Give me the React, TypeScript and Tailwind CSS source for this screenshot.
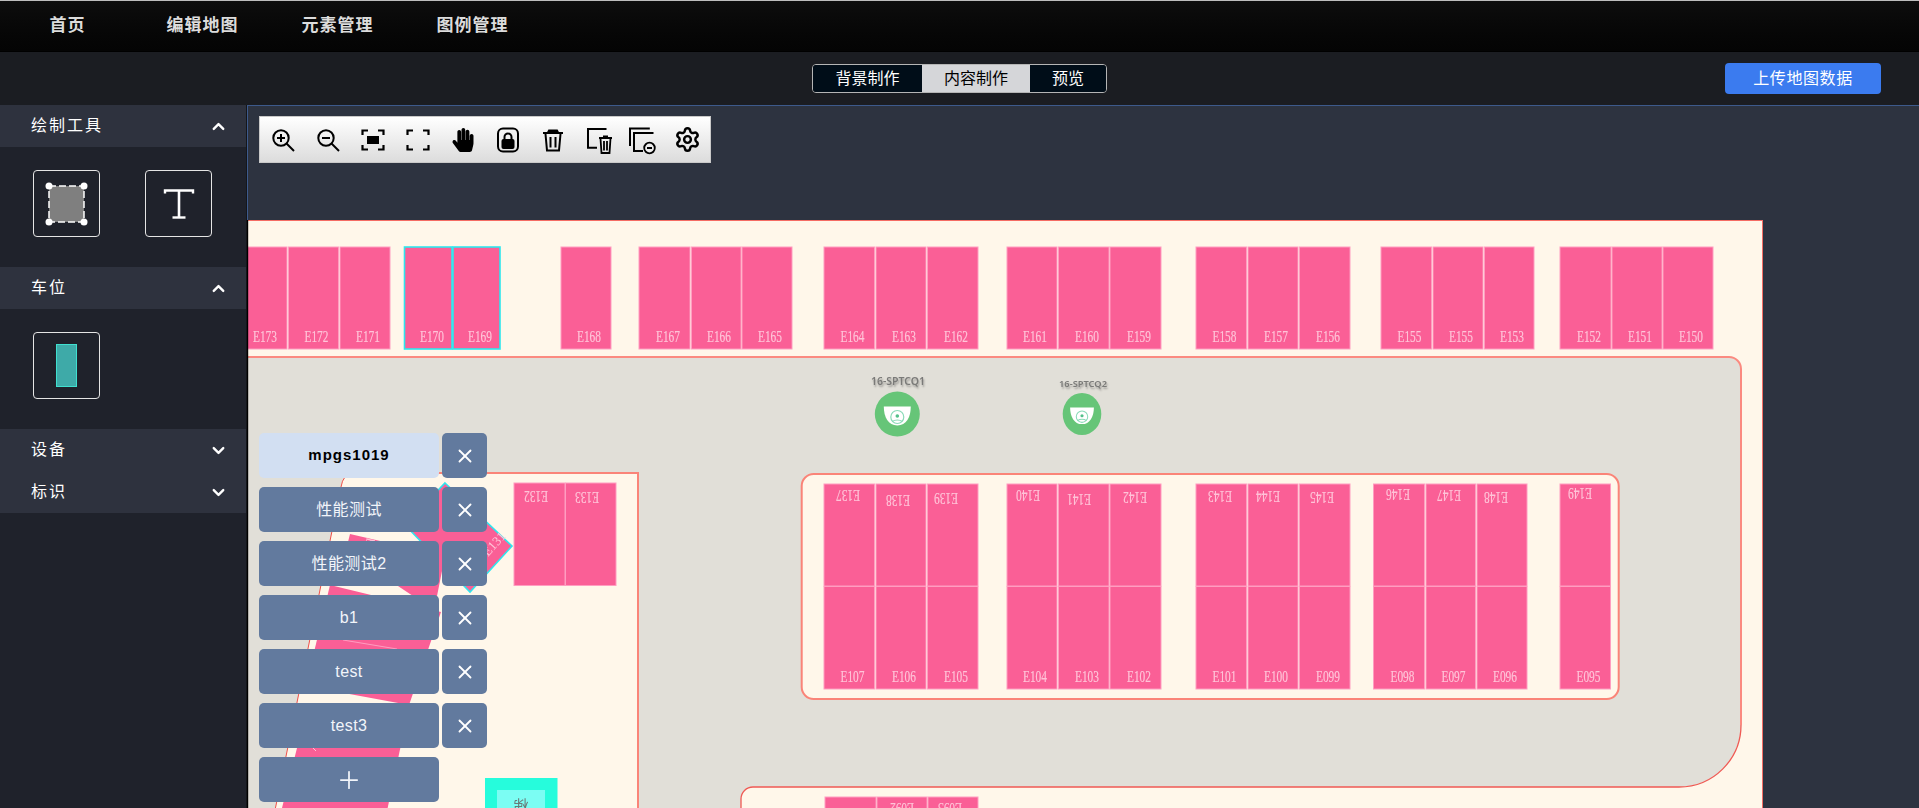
import { ChevronDown, ChevronUp, Plus, Settings, X } from 'lucide-react';
import { FaHandPaper } from 'react-icons/fa';

const navItems = ['首页', '编辑地图', '元素管理', '图例管理'];
const layers = ['mpgs1019', '性能测试', '性能测试2', 'b1', 'test', 'test3'];

// [left, right, label]
const topRow: [number, number, string][] = [
  [238, 287, 'E173'], [288.5, 338.5, 'E172'], [340, 390, 'E171'],
  [561, 611, 'E168'],
  [639, 690, 'E167'], [691.5, 741, 'E166'], [742, 792, 'E165'],
  [824, 874.5, 'E164'], [876, 926, 'E163'], [927.5, 978, 'E162'],
  [1007, 1057, 'E161'], [1058.5, 1109, 'E160'], [1110, 1161, 'E159'],
  [1196, 1246.5, 'E158'], [1248, 1298, 'E157'], [1299.5, 1350, 'E156'],
  [1381, 1431.5, 'E155'], [1433, 1483, 'E155'], [1484.5, 1534, 'E153'],
  [1560, 1611, 'E152'], [1612, 1662, 'E151'], [1663, 1713, 'E150'],
];

// [left, right, top label, top label x, top label y, bottom label]
const islandCols: [number, number, string, number, number, string][] = [
  [824, 874.5, 'E137', 836, 490, 'E107'], [876, 926, 'E138', 886, 495, 'E106'], [927.5, 978, 'E139', 934, 493, 'E105'],
  [1007, 1057, 'E140', 1016, 490, 'E104'], [1058.5, 1109, 'E141', 1067, 494, 'E103'], [1110, 1161, 'E142', 1123, 492, 'E102'],
  [1196, 1246.5, 'E143', 1208, 491, 'E101'], [1248, 1298, 'E144', 1256, 491, 'E100'], [1299.5, 1350, 'E145', 1310, 492, 'E099'],
  [1373.5, 1424.5, 'E146', 1386, 489, 'E098'], [1426, 1475.5, 'E147', 1437, 490, 'E097'], [1477, 1527, 'E148', 1484, 492, 'E096'],
  [1560, 1610.5, 'E149', 1568, 488, 'E095'],
];

function SpaceLabel({ x, y, text, flip }: { x: number; y: number; text: string; flip?: boolean }) {
  // y is the top of the letters
  return (
    <text
      x={x}
      y={y + 11}
      fontSize={16.5}
      fill="#ffc4d8"
      stroke="#ffc4d8"
      strokeWidth={0.15}
      fontFamily="'Liberation Serif', serif"
      textLength={24}
      lengthAdjust="spacingAndGlyphs"
      transform={flip ? `rotate(180 ${x + 12} ${y + 5.5})` : undefined}
    >
      {text}
    </text>
  );
}

function Space({ x1, x2, y1, y2, selected }: { x1: number; x2: number; y1: number; y2: number; selected?: boolean }) {
  return (
    <rect
      x={x1}
      y={y1}
      width={x2 - x1}
      height={y2 - y1}
      fill="#fa5f96"
      stroke={selected ? '#2ee6ee' : '#ff9dc0'}
      strokeWidth={selected ? 1.6 : 1}
    />
  );
}

function Camera({ cx, scale }: { cx: number; scale: number }) {
  return (
    <g transform={`translate(${cx} 414) scale(${scale})`}>
      <path d="M-13.5 -7.5 H13.5 C13.5 3 9 11.5 0 11.5 C-9 11.5 -13.5 3 -13.5 -7.5 Z" fill="#fff" />
      <circle cx={0} cy={3} r={6.5} fill="none" stroke="#8adbb8" strokeWidth={1.2} />
      <circle cx={0} cy={2} r={1.8} fill="#52c08a" />
      <path d="M-5 7.5 C-2.5 5.5 2.5 5.5 5 7.5" fill="none" stroke="#8adbb8" strokeWidth={1.2} />
    </g>
  );
}

function ParkingMap() {
  return (
    <svg
      className="absolute left-0 top-[114px] blur-[0.3px]"
      width={1516}
      height={589}
      viewBox="247 220 1516 589"
    >
      <rect x={247} y={220.5} width={1515.5} height={600} fill="#fff7ea" stroke="#f56c64" strokeWidth={1} />

      {/* road */}
      <path
        d="M248 357 H1729 a12 12 0 0 1 12 12 V725 a62 62 0 0 1 -62 62 H753 a12 12 0 0 0 -12 12 V820 H248 Z"
        fill="#e1dfd8"
      />
      <path d="M248 357 H1729 a12 12 0 0 1 12 12 V725" fill="none" stroke="#fb8a80" strokeWidth={2} />
      <path d="M1741 725 a62 62 0 0 1 -62 62 H753 a12 12 0 0 0 -12 12 V820" fill="none" stroke="#ef5a54" strokeWidth={1.3} />

      {/* islands */}
      <rect x={801.7} y={474} width={817} height={225} rx={12} fill="#fff7ea" stroke="#fa8478" strokeWidth={2} />
      <path d="M638 820 V473 H353 Q343 474 341 487 L273 820 Z" fill="#fff7ea" />
      <path d="M638 820 V473 H353" fill="none" stroke="#fa8478" strokeWidth={2} />
      <path d="M353 473 Q343 474 341 487 L273 820" fill="none" stroke="#ef4f4a" strokeWidth={1} />

      {/* top row */}
      {topRow.map(([x1, x2, label]) => (
        <g key={`${label}-${x1}`}>
          <Space x1={x1} x2={x2} y1={247} y2={349} />
          <SpaceLabel x={x2 - 34} y={331} text={label} />
        </g>
      ))}
      <Space x1={404.5} x2={452} y1={247} y2={349} selected />
      <Space x1={453} x2={500} y1={247} y2={349} selected />
      <SpaceLabel x={420} y={331} text="E170" />
      <SpaceLabel x={468} y={331} text="E169" />

      {/* middle island */}
      {islandCols.map(([x1, x2, top, tx, ty, bottom]) => (
        <g key={top}>
          <Space x1={x1} x2={x2} y1={484} y2={586} />
          <Space x1={x1} x2={x2} y1={586.5} y2={689} />
          <SpaceLabel x={tx} y={ty} text={top} flip />
          <SpaceLabel x={x2 - 34} y={671} text={bottom} />
        </g>
      ))}

      {/* left island */}
      <Space x1={514} x2={565} y1={483} y2={585.5} />
      <Space x1={565.5} x2={616} y1={483} y2={585.5} />
      <SpaceLabel x={524} y={491} text="E132" flip />
      <SpaceLabel x={575} y={492} text="E133" flip />

      <polygon points="445,483 512,546 470,592 405,525" fill="#fa5f96" stroke="#2ee6ee" strokeWidth={1.6} />
      <text x={0} y={0} fontSize={13} fill="#ffc4d8" fontFamily="'Liberation Serif', serif" transform="translate(488 557) rotate(-48)">
        E131
      </text>
      <polygon points="350,534 445,556 437,596 413,596 395,584 340,574" fill="#fa5f96" />
      <text x={0} y={0} fontSize={13} fill="#ffc4d8" fontFamily="'Liberation Serif', serif" transform="translate(367 537) rotate(103)">
        E128
      </text>
      <polygon points="330,585 441,612 409,705 306,686" fill="#fa5f96" />
      <line x1={343} y1={640} x2={397} y2={649} stroke="#ff9dc0" strokeWidth={1} />
      <polygon points="305,716 402,740 383,830 279,820" fill="#fa5f96" />
      <line x1={313} y1={748} x2={316} y2={751} stroke="#ffc4d8" strokeWidth={1} />

      <rect x={485} y={778} width={72.5} height={40} fill="#26fcdc" />
      <rect x={497} y={790} width={48} height={30} fill="#7bfdf3" />
      <text x={521} y={806} fontSize={15} fill="#6a7a78" textAnchor="middle" fontFamily="'Noto Sans CJK SC', sans-serif" transform="rotate(180 521 803)">
        梯
      </text>

      {/* bottom island */}
      <Space x1={825} x2={876} y1={797} y2={830} />
      <Space x1={877} x2={927} y1={797} y2={830} />
      <Space x1={928} x2={978} y1={797} y2={830} />
      <SpaceLabel x={890} y={803} text="E092" flip />
      <SpaceLabel x={938} y={803} text="E093" flip />

      {/* cameras */}
      <text x={871} y={385} fontSize={10} fill="#7a7a78" fontWeight={600} fontFamily="'Noto Sans', sans-serif" textLength={54} lengthAdjust="spacingAndGlyphs" style={{ textShadow: '1px 2px 2px rgba(0,0,0,0.3)' }}>
        16-SPTCQ1
      </text>
      <ellipse cx={897.3} cy={414} rx={22.5} ry={22.5} fill="#66c578" />
      <Camera cx={897.3} scale={1} />
      <text x={1059} y={387} fontSize={9} fill="#7a7a78" fontWeight={600} fontFamily="'Noto Sans', sans-serif" textLength={48} lengthAdjust="spacingAndGlyphs" style={{ textShadow: '1px 2px 2px rgba(0,0,0,0.3)' }}>
        16-SPTCQ2
      </text>
      <ellipse cx={1082} cy={414} rx={19.3} ry={21} fill="#66c578" />
      <Camera cx={1082} scale={0.88} />

      {/* dark edge along the panel, drawn last so it sits over the spaces */}
      <line x1={247.5} y1={220} x2={247.5} y2={809} stroke="#000" strokeWidth={1.4} />
    </svg>
  );
}

function Icon({ children }: { children: React.ReactNode }) {
  return (
    <svg className="overflow-visible" width={26} height={26} viewBox="0 0 26 26" fill="none" stroke="#000" strokeWidth={2}>
      {children}
    </svg>
  );
}

const Brackets = () => (
  <path d="M2.5 8 V3.5 H8 M18 3.5 H23.5 V8 M23.5 18 V22.5 H18 M8 22.5 H2.5 V18" strokeWidth={2.2} />
);

const toolIcons = [
  <Icon key="in">
    <circle cx={11} cy={11} r={7.7} />
    <path d="M7 11 H15 M11 7 V15" />
    <path d="M16.5 16.5 L24 24" />
  </Icon>,
  <Icon key="out">
    <circle cx={11} cy={11} r={7.7} />
    <path d="M7 11 H15" />
    <path d="M16.5 16.5 L24 24" />
  </Icon>,
  <Icon key="fit">
    <Brackets />
    <rect x={7} y={9} width={12} height={8} fill="#000" stroke="none" />
  </Icon>,
  <Icon key="full">
    <Brackets />
  </Icon>,
  <FaHandPaper key="hand" className="size-[24px] text-black" />,
  <Icon key="lock">
    <rect x={3} y={1.5} width={20} height={23} rx={5} />
    <rect x={6.5} y={12} width={13} height={10} rx={2} fill="#000" stroke="none" />
    <path d="M9.5 13 V10 a3.5 3.5 0 0 1 7 0 V13" strokeWidth={2} />
  </Icon>,
  <Icon key="trash">
    <path d="M3 6 H23 M9 3.5 H17 L18 5.5 H8 Z" />
    <path d="M5.5 7 L7 23.5 H19 L20.5 7 M10.5 10 V20.5 M15.5 10 V20.5" />
  </Icon>,
  <Icon key="page-trash">
    <path d="M21.5 2 H3 V20.7 H12" />
    <path d="M14 11 H27 M18 9.5 H23 M15.5 11.5 L16.5 26 H24.5 L25.5 11.5 M19 14 V23.5 M22 14 V23.5" strokeWidth={1.8} />
  </Icon>,
  <Icon key="pages-minus">
    <path d="M19.8 1.5 H0 V19" />
    <path d="M23.5 6 H4 V24 H13" />
    <circle cx={19.5} cy={21} r={5.3} strokeWidth={1.8} fill="#eee" />
    <path d="M17 21 H22" />
  </Icon>,
  <Settings key="gear" size={27} strokeWidth={2.2} color="#000" />,
];

function SideHeader({ title, open }: { title: string; open?: boolean }) {
  return (
    <div className="flex h-[42px] items-center justify-between bg-[#2e323e] pl-[31px] pr-[18px] text-base tracking-[2px] text-white">
      <span>{title}</span>
      {open ? <ChevronUp size={19} strokeWidth={3} /> : <ChevronDown size={19} strokeWidth={3} />}
    </div>
  );
}

export default function App() {
  return (
    <div className="h-[808px] w-[1919px] overflow-hidden bg-[#1f222b] font-['Liberation_Sans','Noto_Sans_CJK_SC',sans-serif]">
      {/* top nav */}
      <div className="flex h-[52px] border-t border-t-[#bdbdbd] border-b border-b-black bg-gradient-to-b from-[#0d0d0d] to-[#040404]">
        {navItems.map(item => (
          <div key={item} className="flex w-[135px] items-center justify-center pb-px text-[17px] font-bold tracking-[1px] text-[#dcdcdc]">
            {item}
          </div>
        ))}
      </div>

      {/* sub header */}
      <div className="grid h-[53px] grid-cols-[1fr_auto_1fr] items-center bg-[#1b1d22] text-base">
        <div />
        <div className="flex h-[29px] overflow-hidden rounded border border-[#b5b5b5] text-white">
          <div className="flex w-[109px] items-center justify-center bg-[#000d18]">背景制作</div>
          <div className="flex w-[108px] items-center justify-center bg-[#d5d6d9] text-black">内容制作</div>
          <div className="flex w-[76px] items-center justify-center bg-[#000d18]">预览</div>
        </div>
        <button className="mr-[38px] h-[31px] w-[156px] justify-self-end rounded bg-[#3b7bef] tracking-[0.6px] text-white">
          上传地图数据
        </button>
      </div>

      <div className="flex h-[703px]">
        {/* side panel */}
        <div className="w-[247px] shrink-0 border-r border-r-[#14161a] bg-[#1f222b]">
          <SideHeader title="绘制工具" open />
          <div className="flex h-[120px] gap-[45px] pl-[33px] pt-[23px]">
            <div className="flex size-[67px] items-center justify-center rounded border border-[#e5e5e5]">
              <svg width={44} height={44} viewBox="0 0 44 44">
                <rect x={4} y={4} width={35} height={36} fill="#7f7f7f" stroke="#fff" strokeWidth={1.5} strokeDasharray="7 3" />
                <circle cx={4} cy={4} r={3.5} fill="#fff" />
                <circle cx={39} cy={4} r={3.5} fill="#fff" />
                <circle cx={4} cy={40} r={3.5} fill="#fff" />
                <circle cx={39} cy={40} r={3.5} fill="#fff" />
              </svg>
            </div>
            <div className="flex size-[67px] items-center justify-center rounded border border-[#e5e5e5]">
              <svg width={34} height={32} viewBox="0 0 34 32" fill="none" stroke="#fff">
                <path d="M3 5.5 V2.5 H31 V5.5" strokeWidth={2.4} />
                <path d="M17 2 V30" strokeWidth={2.6} />
                <path d="M10.5 29.5 H23.5" strokeWidth={2.4} />
              </svg>
            </div>
          </div>
          <SideHeader title="车位" open />
          <div className="h-[120px] pl-[33px] pt-[23px]">
            <div className="flex size-[67px] items-center justify-center rounded border border-[#e5e5e5]">
              <div className="h-[43px] w-[21px] border border-[#3fe0d0] bg-[#3eaaa8]" />
            </div>
          </div>
          <SideHeader title="设备" />
          <SideHeader title="标识" />
        </div>

        {/* map canvas */}
        <div className="relative flex-1 overflow-hidden border-t border-t-[#3d5a8c] bg-[#2d3340]">
          <div className="absolute left-0 top-0 h-[114px] w-px bg-[#3d5a8c]" />
          <ParkingMap />

          <div className="absolute left-[12px] top-[10px] flex h-[47px] border border-[#c9c9c9] bg-gradient-to-b from-white to-[#dcdcdc]">
            {toolIcons.map((icon, i) => (
              <div key={i} className="flex w-[45px] items-center justify-center">
                {icon}
              </div>
            ))}
          </div>

          <div className="absolute left-[12px] top-[327px] flex flex-col gap-[9px]">
            {layers.map((name, i) => (
              <div key={name} className="flex gap-[3px]">
                <div
                  className={
                    i === 0
                      ? 'flex h-[45px] w-[180px] items-center justify-center rounded-[5px] bg-[#d2dff2] text-[15px] font-bold tracking-[1px] text-black'
                      : 'flex h-[45px] w-[180px] items-center justify-center rounded-[5px] bg-[#627a9e] text-base tracking-[0.4px] text-[#f2f5fa]'
                  }
                >
                  {name}
                </div>
                <div className="flex size-[45px] items-center justify-center rounded-[5px] bg-[#627a9e] text-white">
                  <X size={22} strokeWidth={2} />
                </div>
              </div>
            ))}
            <div className="flex h-[45px] w-[180px] items-center justify-center rounded-[5px] bg-[#627a9e] text-[#f2f5fa]">
              <Plus size={28} strokeWidth={1.5} />
            </div>
          </div>
        </div>
      </div>
    </div>
  );
}
